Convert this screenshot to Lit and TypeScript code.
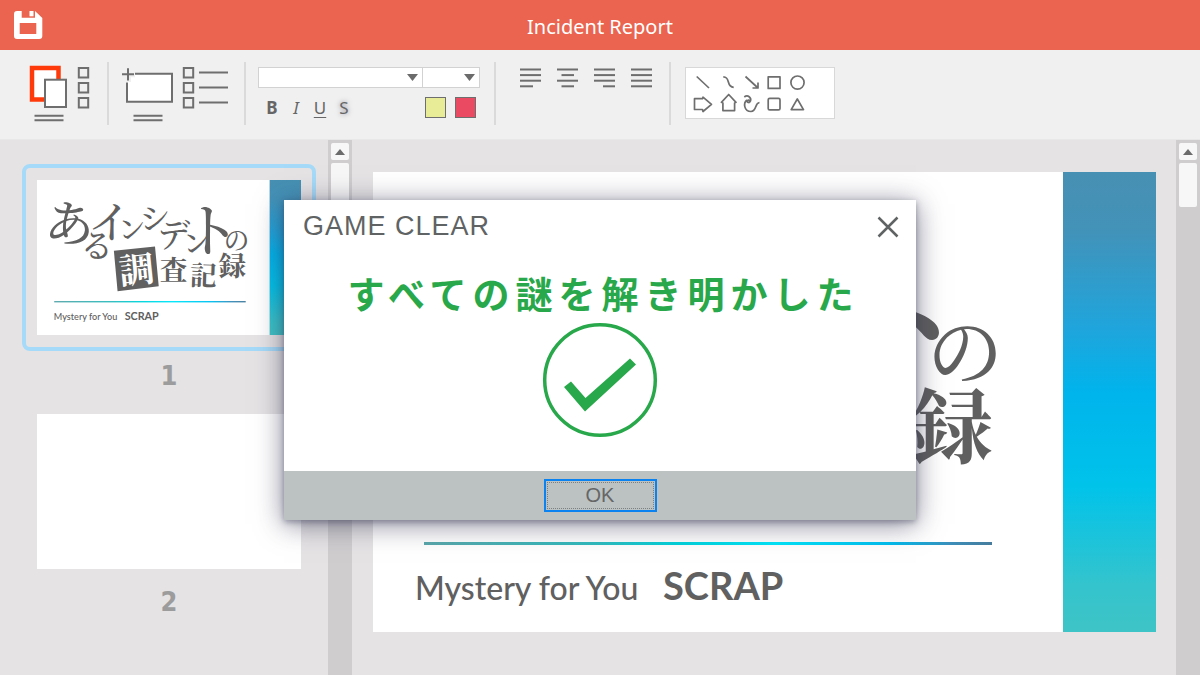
import { LitElement, html, svg, css } from "lit";
import { customElement, property, state } from "lit/decorators.js";

interface LogoGlyph {
  char: string;
  x: number;
  y: number;
  size: number;
  tilt: number;
  tone?: "inverse" | "heavy";
}

/* Glyph centres on the 783 x 460 slide. */
const LOGO: LogoGlyph[] = [
  { char: "あ", x: 98, y: 128, size: 146, tilt: 6 },
  { char: "る", x: 179, y: 194, size: 98, tilt: 6 },
  { char: "イ", x: 215, y: 122, size: 128, tilt: 0 },
  { char: "ン", x: 281, y: 144, size: 82, tilt: -4 },
  { char: "シ", x: 350, y: 112, size: 92, tilt: -4 },
  { char: "デ", x: 406, y: 161, size: 98, tilt: 0 },
  { char: "ン", x: 472, y: 185, size: 80, tilt: -4 },
  { char: "ト", x: 518, y: 147, size: 170, tilt: 0 },
  { char: "の", x: 592, y: 179, size: 76, tilt: 0 },
  { char: "調", x: 295, y: 264, size: 104, tilt: -6, tone: "inverse" },
  { char: "査", x: 405, y: 267, size: 82, tilt: 0, tone: "heavy" },
  { char: "記", x: 494, y: 282, size: 80, tilt: 2, tone: "heavy" },
  { char: "録", x: 579, y: 254, size: 82, tilt: 0, tone: "heavy" },
];

@customElement("title-slide")
class TitleSlide extends LitElement {
  @property({ type: Boolean }) compact = false;

  static styles = css`
    :host { display: block; background: #fff; }
    .art { display: block; width: 100%; height: auto; }
    .glyph {
      font-family: "Noto Serif CJK JP", "Noto Sans CJK JP", sans-serif;
      font-weight: 500;
      text-anchor: middle;
      fill: #606060;
    }
    .heavy { font-weight: 700; }
    .inverse { font-weight: 700; fill: #fff; }
    .plate { fill: #606060; }
    .brand { font-family: Lato, sans-serif; fill: #606060; }
    .series { font-size: 32px; font-weight: 500; }
    .maker { font-size: 38px; font-weight: 700; }
    .small .series { font-size: 27px; }
    .small .maker { font-size: 32px; }
  `;

  render() {
    const foot = this.compact
      ? { rule: 359, base: 415, series: 50, maker: 260 }
      : { rule: 370, base: 428, series: 42, maker: 290 };
    return html`
      <svg class="art ${this.compact ? "small" : ""}" viewBox="0 0 783 460">
        <defs>
          <linearGradient id="band" x1="0" y1="0" x2="0" y2="1">
            <stop offset="0" stop-color="#4790b3" />
            <stop offset="0.12" stop-color="#4392b8" />
            <stop offset="0.34" stop-color="#1fa5dc" />
            <stop offset="0.48" stop-color="#00b4ec" />
            <stop offset="0.68" stop-color="#00c3ea" />
            <stop offset="0.9" stop-color="#34c4cd" />
            <stop offset="1" stop-color="#3ec4c6" />
          </linearGradient>
          <linearGradient id="rule" x1="0" y1="0" x2="1" y2="0">
            <stop offset="0" stop-color="#5aa8ab" />
            <stop offset="0.3" stop-color="#30bcbe" />
            <stop offset="0.45" stop-color="#00d4dc" />
            <stop offset="0.62" stop-color="#00e6fa" />
            <stop offset="0.82" stop-color="#00bff0" />
            <stop offset="0.93" stop-color="#3c8db8" />
            <stop offset="1" stop-color="#467c9c" />
          </linearGradient>
        </defs>
        <rect x="690" y="0" width="93" height="460" fill="url(#band)" />
        <polygon class="plate" points="228,210 350,197 361,315 239,330" />
        ${LOGO.map(
          (g) => svg`<text
            class="glyph ${g.tone ?? ""}"
            font-size=${g.size}
            x=${g.x}
            y=${g.y + Math.round(g.size * 0.38)}
            transform="rotate(${g.tilt} ${g.x} ${g.y})"
          >${g.char}</text>`
        )}
        <rect x="51" y=${foot.rule} width="568" height=${this.compact ? 4 : 3} fill="url(#rule)" />
        <text class="brand series" x=${foot.series} y=${foot.base}>Mystery for You</text>
        <text class="brand maker" x=${foot.maker} y=${foot.base}>SCRAP</text>
      </svg>
    `;
  }
}

@customElement("scroll-track")
class ScrollTrack extends LitElement {
  static styles = css`
    :host {
      display: flex;
      flex-direction: column;
      gap: 3px;
      flex: none;
      width: 24px;
      box-sizing: border-box;
      padding: 3px;
      background: #cfcdce;
    }
    .up {
      display: grid;
      place-items: center;
      height: 17px;
      padding: 0;
      border: 0;
      border-radius: 2px;
      background: #f7f7f7;
    }
    .thumb { height: 44px; border-radius: 2px; background: #f7f7f7; }
  `;

  render() {
    return html`
      <button class="up" aria-label="Scroll up">
        <svg width="10" height="6" viewBox="0 0 10 6"><path d="M0 6L5 0L10 6Z" fill="#6b6b6b" /></svg>
      </button>
      <div class="thumb"></div>
    `;
  }
}

@customElement("tool-bar")
class ToolBar extends LitElement {
  static styles = css`
    :host {
      display: flex;
      flex: none;
      box-sizing: border-box;
      height: 90px;
      padding-top: 12px;
      background: #f0f0f0;
      border-bottom: 1px solid #e9e8e8;
      font-family: "Noto Sans", sans-serif;
    }
    .group {
      display: flex;
      align-items: flex-start;
      flex: none;
      box-sizing: border-box;
      height: 63px;
      border-right: 2px solid #dadada;
    }
    .group:last-child { border-right: 0; }
    .slides { gap: 8px; padding: 0 17px 0 29px; }
    .insert { gap: 8px; padding: 0 16px 0 12px; }
    .type { display: grid; align-content: start; gap: 9px; padding: 5px 14px 0 12px; }
    .align { gap: 16px; padding: 6px 17px 0 24px; }
    .draw { padding: 5px 0 0 14px; }
    button { display: block; padding: 0; border: 0; background: none; color: #666; }
    svg { display: block; fill: none; stroke: #6e6e6e; stroke-width: 2; }
    .pickers { display: flex; }
    .picker { position: relative; display: block; }
    .picker svg { position: absolute; right: 5px; top: 7px; pointer-events: none; stroke: none; fill: #6b6b6b; }
    .picker + .picker { margin-left: -1px; }
    select {
      display: block;
      appearance: none;
      box-sizing: border-box;
      height: 21px;
      border: 1px solid #d2d2d2;
      border-radius: 0;
      background: #fff;
    }
    .family { width: 165px; }
    .size { width: 58px; }
    .marks { display: flex; align-items: center; padding-left: 2px; }
    .mark { width: 24px; height: 21px; font: 17px/21px "Noto Sans", sans-serif; text-align: center; }
    .bold { font-weight: 700; }
    .italic { font-style: italic; }
    .under { text-decoration: underline; text-underline-offset: 3px; text-decoration-thickness: 1px; }
    .shade { text-shadow: 0 0 5px #77778a; }
    .swatches { display: flex; gap: 9px; margin-left: auto; padding-right: 4px; }
    .swatch { box-sizing: border-box; width: 21px; height: 21px; border: 1px solid #6e6e6e; }
    .lime { background: #e8ec96; }
    .rose { background: #ea4a62; }
    .shapes {
      display: grid;
      grid-template-columns: repeat(5, 24px);
      grid-auto-rows: 21px;
      box-sizing: border-box;
      width: 150px;
      padding: 4px 0 4px 5px;
      border: 1px solid #d8d8d8;
      background: #fff;
    }
    .shapes svg { stroke-width: 1.7; stroke-linejoin: round; }
  `;

  private alignIcon(label: string, rows: [number, number][]) {
    return html`<button aria-label=${label}>
      <svg width="21" height="20" viewBox="0 0 21 20">
        ${rows.map(([a, b], i) => svg`<path d="M${a} ${1.5 + i * 5.6}H${b}" />`)}
      </svg>
    </button>`;
  }

  private shape(label: string, drawing: unknown) {
    return html`<button aria-label=${label}><svg width="24" height="21" viewBox="0 0 24 21">${drawing}</svg></button>`;
  }

  render() {
    return html`
      <div class="group slides">
        <button aria-label="Paste slide">
          <svg width="40" height="62" viewBox="0 0 40 62">
            <rect x="3" y="6" width="26.5" height="31.5" fill="#fff" stroke="#ff3a0a" stroke-width="4.5" />
            <rect x="16" y="17.7" width="21" height="27.3" fill="#fff" />
            <path d="M5.5 53.7H34.5M5.5 58.2H34.5" />
          </svg>
        </button>
        <button aria-label="Slide list">
          <svg width="13" height="62" viewBox="0 0 13 62">
            <path d="M1.8 6H11.2V15.4H1.8ZM1.8 21H11.2V30.4H1.8ZM1.8 36H11.2V45.4H1.8Z" />
          </svg>
        </button>
      </div>
      <div class="group insert">
        <button aria-label="New slide">
          <svg width="53" height="62" viewBox="0 0 53 62">
            <path d="M5 11.7H51V39.7H5Z" fill="#fff" stroke="none" />
            <path d="M14 11.7H51V39.7H6V20.5" />
            <path d="M0 12.3H14M7 5V20" stroke="#f0f0f0" stroke-width="6" />
            <path d="M1 12.3H13M7 6.3V18.5M12.5 53.7H41.5M12.5 58.2H41.5" />
          </svg>
        </button>
        <button aria-label="Layout">
          <svg width="46" height="62" viewBox="0 0 46 62">
            <path d="M1.8 6H11.2V15.4H1.8ZM1.8 21H11.2V30.4H1.8ZM1.8 36H11.2V45.4H1.8ZM17 10.4H46M17 25.4H46M17 40.4H46" />
          </svg>
        </button>
      </div>
      <div class="group type">
        <div class="pickers">
          <label class="picker">
            <select class="family" aria-label="Font"><option></option></select>
            <svg width="11" height="7" viewBox="0 0 11 7"><path d="M0 0H11L5.5 7Z" /></svg>
          </label>
          <label class="picker">
            <select class="size" aria-label="Font size"><option></option></select>
            <svg width="11" height="7" viewBox="0 0 11 7"><path d="M0 0H11L5.5 7Z" /></svg>
          </label>
        </div>
        <div class="marks">
          <button class="mark bold">B</button>
          <button class="mark italic">I</button>
          <button class="mark under">U</button>
          <button class="mark shade">S</button>
          <div class="swatches">
            <button class="swatch lime" aria-label="Highlight colour"></button>
            <button class="swatch rose" aria-label="Text colour"></button>
          </div>
        </div>
      </div>
      <div class="group align">
        ${this.alignIcon("Align left", [[0, 21], [0, 21], [0, 21], [0, 13]])}
        ${this.alignIcon("Align centre", [[0, 21], [4.5, 17], [0, 21], [4.5, 17]])}
        ${this.alignIcon("Align right", [[0, 21], [0, 21], [0, 21], [9, 21]])}
        ${this.alignIcon("Justify", [[0, 21], [0, 21], [0, 21], [0, 21]])}
      </div>
      <div class="group draw">
        <div class="shapes">
          ${this.shape("Line", svg`<path d="M5.7 4.5L18 16" />`)}
          ${this.shape("Curve", svg`<path d="M8.3 4.8C16 5 10.500 14.500 18.700 15.300" />`)}
          ${this.shape("Arrow", svg`<path d="M6.500 4.500L19 16M13.500 16H19V10.500" />`)}
          ${this.shape("Square", svg`<rect x="5.200" y="4.800" width="11.800" height="11.600" />`)}
          ${this.shape("Circle", svg`<circle cx="10.500" cy="10.600" r="6.600" />`)}
          ${this.shape("Block arrow", svg`<path d="M3.500 5.700H11.500L12 4.200L20.500 11.300L12 18.500L11.500 16.500H3.500Z" />`)}
          ${this.shape("House arrow", svg`<path d="M13.700 1.500L21 9.300L19.600 10V17.600H7.900V10L6.400 9.300Z" />`)}
          ${this.shape("Freeform", svg`<path d="M5.300 4C9 1 12.500 5 11.500 8C10.500 10.500 7 9.500 8.500 7.500C10 6 11.500 8.500 9.500 10M8 7C4 10 5 18.500 12 18.500C18 18.500 15.500 10 20.500 9.500" />`)}
          ${this.shape("Rounded square", svg`<rect x="5.200" y="5.300" width="11.800" height="11.600" rx="1.500" />`)}
          ${this.shape("Triangle", svg`<path d="M10.300 6L16.500 16.600H4.200Z" />`)}
        </div>
      </div>
    `;
  }
}

@customElement("clear-dialog")
class ClearDialog extends LitElement {
  static styles = css`
    :host {
      display: block;
      background: #fff;
      box-shadow: 0 2px 6px rgba(50, 50, 80, 0.4), 0 4px 26px rgba(50, 50, 80, 0.6);
      font-family: "Liberation Sans", sans-serif;
      color: #5f6363;
    }
    .head {
      display: flex;
      align-items: center;
      justify-content: space-between;
      height: 53px;
      padding: 0 12px 0 19px;
    }
    .title { margin: 0; font-size: 27px; font-weight: 400; letter-spacing: 1px; }
    .close { display: block; padding: 5px; border: 0; background: none; }
    .body { display: flex; flex-direction: column; align-items: center; padding: 16px 0 33px; }
    .message {
      margin: 0 0 5px;
      padding-left: 7px;
      font: 700 37px/48px "Noto Sans CJK JP", sans-serif;
      letter-spacing: 6px;
      color: #28a84a;
    }
    svg { display: block; }
    .foot { display: flex; justify-content: center; padding: 8px 0; background: #bcc2c2; }
    .ok {
      box-sizing: border-box;
      width: 113px;
      height: 33px;
      padding: 0;
      border: 2px solid #0a82f0;
      background: none;
      outline: 1px dotted #7c8080;
      outline-offset: -4px;
      font: 20px "Liberation Sans", sans-serif;
      color: #666;
    }
  `;

  private dismiss() {
    this.dispatchEvent(new CustomEvent("dismiss"));
  }

  render() {
    return html`
      <header class="head">
        <h2 class="title">GAME CLEAR</h2>
        <button class="close" aria-label="Close" @click=${this.dismiss}>
          <svg width="22" height="22" viewBox="0 0 22 22">
            <path d="M1.500 1.500L20.500 20.500M20.500 1.500L1.500 20.500" stroke="#5f6363" stroke-width="2.500" />
          </svg>
        </button>
      </header>
      <div class="body">
        <p class="message">すべての謎を解き明かした</p>
        <svg width="116" height="116" viewBox="0 0 116 116">
          <circle cx="58" cy="58" r="55.300" fill="none" stroke="#28a84a" stroke-width="3.500" />
          <path d="M22 65L29 59.500L43.500 76L88 36.500L94 42.500L43 89.500Z" fill="#28a84a" />
        </svg>
      </div>
      <footer class="foot"><button class="ok" @click=${this.dismiss}>OK</button></footer>
    `;
  }
}

@customElement("app-root")
class AppRoot extends LitElement {
  @property() heading = "Incident Report";
  @state() private cleared = true;

  static styles = css`
    :host {
      position: relative;
      display: flex;
      flex-direction: column;
      height: 100vh;
      overflow: hidden;
      background: #e5e3e4;
      font-family: "Noto Sans", sans-serif;
    }
    .bar {
      display: grid;
      grid-template-columns: 1fr auto 1fr;
      align-items: center;
      flex: none;
      height: 50px;
      padding: 0 14px;
      background: #ea644f;
      color: #fff;
    }
    .save { display: block; justify-self: start; padding: 0; border: 0; background: none; }
    .save svg { display: block; }
    .heading { margin: 0; padding-top: 2px; font-size: 20px; font-weight: 400; }
    .work { display: flex; flex: 1; min-height: 0; }
    .deck {
      flex: none;
      box-sizing: border-box;
      width: 328px;
      padding: 24px 12px 0 22px;
      overflow: hidden;
    }
    .thumb {
      box-sizing: border-box;
      padding: 12px 11px 4px;
      border: 4px solid transparent;
      border-radius: 8px;
    }
    .current { padding-bottom: 12px; border-color: #a5daf8; }
    .blank { aspect-ratio: 783 / 460; background: #fff; }
    .number {
      margin: 0;
      padding: 6px 0 3px;
      font: 700 27px/38px "DejaVu Sans Condensed", "DejaVu Sans", sans-serif;
      text-align: center;
      color: #9c9c9c;
    }
    .stage { flex: 1; min-width: 0; padding: 32px 20px 0 21px; overflow: hidden; }
    .dialog { position: absolute; top: 200px; left: 50%; width: 632px; transform: translateX(-50%); }
  `;

  render() {
    return html`
      <header class="bar">
        <button class="save" aria-label="Save">
          <svg width="29" height="28" viewBox="0 0 29 28" fill="#fff">
            <path fill-rule="evenodd" d="M3 0H7.700V6.700H21V0L28.300 7V25Q28.300 28 25.300 28H3Q0 28 0 25V3Q0 0 3 0ZM5.700 12V23H22.300V12Z" />
            <rect x="15.500" y="0" width="4" height="5.300" />
          </svg>
        </button>
        <h1 class="heading">${this.heading}</h1>
      </header>
      <tool-bar></tool-bar>
      <main class="work">
        <aside class="deck">
          <div class="thumb current"><title-slide compact></title-slide></div>
          <p class="number">1</p>
          <div class="thumb"><div class="blank"></div></div>
          <p class="number">2</p>
        </aside>
        <scroll-track></scroll-track>
        <section class="stage"><title-slide></title-slide></section>
        <scroll-track></scroll-track>
      </main>
      ${this.cleared
        ? html`<clear-dialog class="dialog" role="dialog" @dismiss=${() => (this.cleared = false)}></clear-dialog>`
        : ""}
    `;
  }
}
